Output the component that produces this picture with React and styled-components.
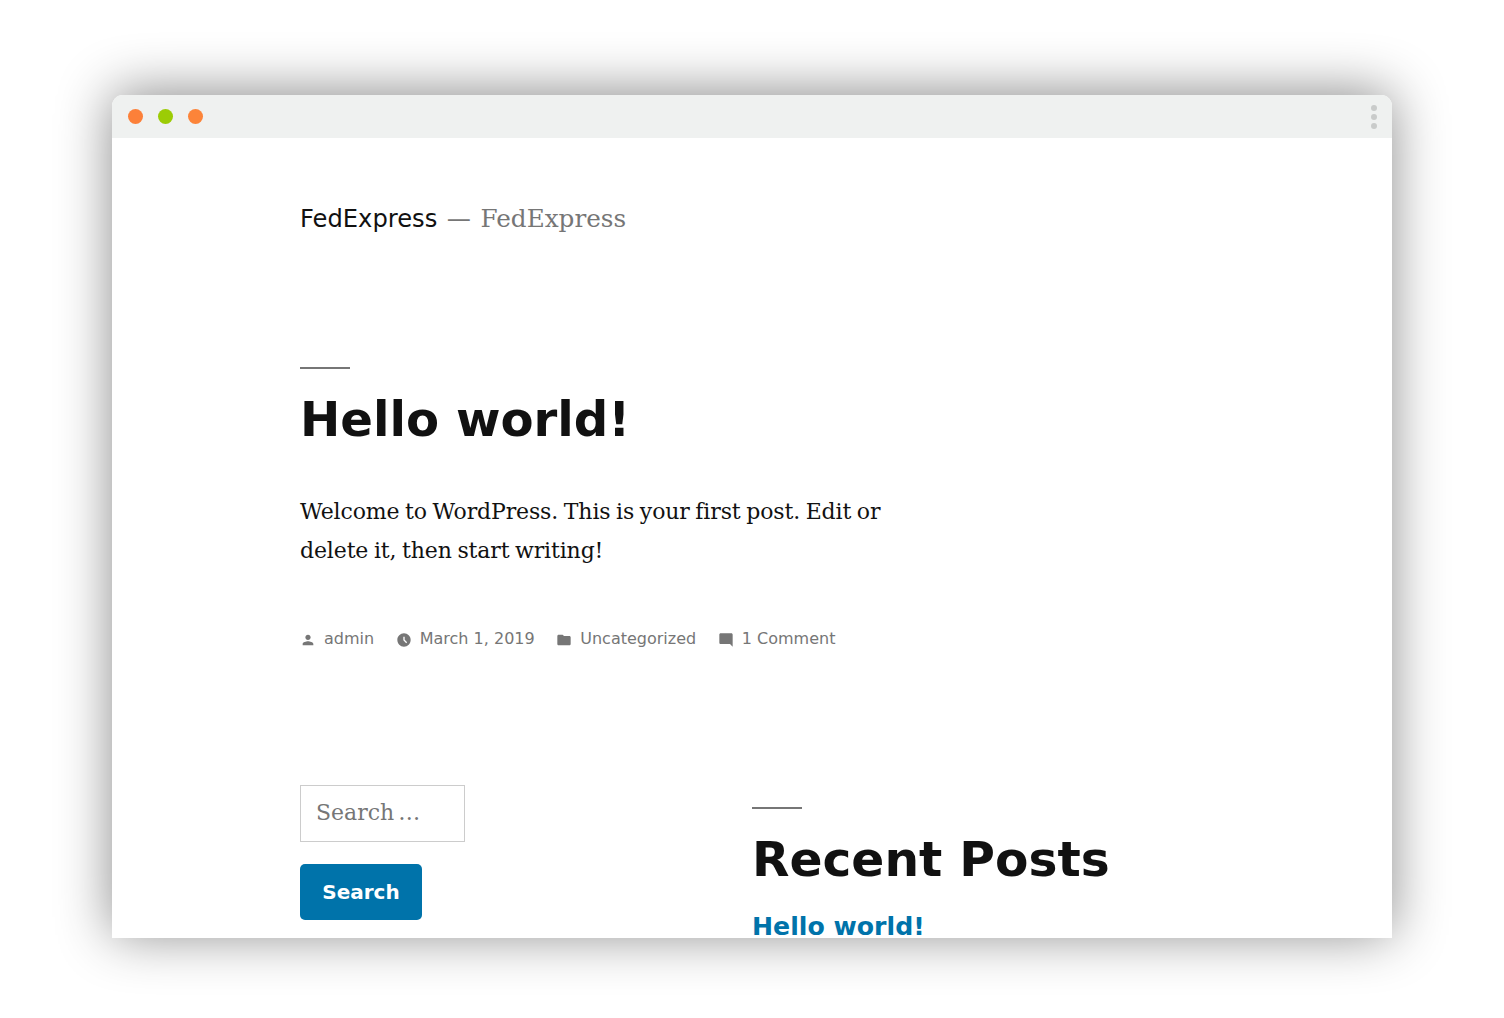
import React from 'react';
import styled, { createGlobalStyle } from 'styled-components';

const GlobalStyle = createGlobalStyle`
	html, body {
		margin: 0;
		padding: 0;
		background: #fff;
	}
	body {
		font-family: 'DejaVu Sans', sans-serif;
	}
`;

const Page = styled.div`
	height: 1018px;
	box-sizing: border-box;
	padding: 95px 112px 80px;
	overflow: hidden;
`;

const Window = styled.div`
	height: 843px;
	display: flex;
	flex-direction: column;
	background: #fff;
	border-radius: 11px 11px 0 0;
	box-shadow: 0 -3px 54px rgba(0, 0, 0, 0.46);
	overflow: hidden;
`;

const TitleBar = styled.div`
	height: 43px;
	flex: none;
	display: flex;
	align-items: center;
	gap: 15px;
	padding: 0 15px 0 16.4px;
	background: #eff1f0;
`;

const Dot = styled.span`
	width: 15px;
	height: 15px;
	border-radius: 50%;
	background: ${(props) => props.color};
`;

const Kebab = styled.div`
	margin-left: auto;
	display: flex;
	flex-direction: column;
	gap: 3px;
	margin-top: 1px;

	span {
		width: 6px;
		height: 6px;
		border-radius: 50%;
		background: #c9cbca;
	}
`;

const Content = styled.div`
	flex: 1;
	padding: 0 0 0 188px;
	overflow: hidden;
`;

const SiteHeader = styled.header`
	display: flex;
	align-items: baseline;
	height: 229px;
	padding-top: 66px;
	box-sizing: border-box;
`;

const SiteTitle = styled.span`
	font-size: 24.2px;
	color: #111;
`;

const SiteDash = styled.span`
	margin: 0 9.5px;
	font-size: 24.2px;
	color: #767676;
`;

const SiteTagline = styled.span`
	font-family: 'DejaVu Serif', serif;
	font-size: 24.7px;
	color: #767676;
`;

const Rule = styled.div`
	width: 50px;
	height: 2px;
	background: #767676;
`;

const PostTitle = styled.h1`
	margin: 16px 0 0;
	font-size: 48.2px;
	line-height: 68px;
	font-weight: 700;
	color: #111;
`;

const PostBody = styled.p`
	width: 600px;
	margin: 39px 0 0;
	font-family: 'DejaVu Serif', serif;
	font-size: 22px;
	line-height: 39px;
	letter-spacing: -0.13px;
	word-spacing: -1.2px;
	color: #111;
`;

const Meta = styled.div`
	display: flex;
	align-items: center;
	gap: 21.6px;
	margin-top: 57px;
	height: 22px;
	font-size: 16px;
	color: #767676;
`;

const MetaItem = styled.span`
	display: flex;
	align-items: center;
	gap: 8px;

	svg {
		width: 16px;
		height: 16px;
		fill: #767676;
		margin-top: 3px;
	}
`;

const Widgets = styled.div`
	display: flex;
	margin-top: 136px;
`;

const SearchColumn = styled.div`
	width: 452px;
	flex: none;
`;

const SearchBox = styled.div`
	width: 165px;
	height: 57px;
	box-sizing: border-box;
	display: flex;
	align-items: center;
	padding: 0 0 2px 15px;
	border: 1px solid #ccc;
	font-family: 'DejaVu Serif', serif;
	font-size: 22px;
	word-spacing: -3px;
	color: #767676;
`;

const SearchButton = styled.button`
	display: block;
	width: 122px;
	height: 56px;
	margin-top: 22px;
	padding: 0;
	border: none;
	border-radius: 5px;
	background: #0073aa;
	color: #fff;
	font-family: 'DejaVu Sans', sans-serif;
	font-size: 20px;
	font-weight: 700;
`;

const RecentColumn = styled.div`
	padding-top: 22px;
`;

const RecentTitle = styled.h2`
	margin: 16px 0 0;
	font-size: 48.7px;
	line-height: 68px;
	font-weight: 700;
	color: #111;
`;

const RecentLink = styled.a`
	display: block;
	margin-top: 16px;
	font-size: 25.2px;
	line-height: 36px;
	font-weight: 700;
	color: #0073aa;
	text-decoration: none;
`;

const metaItems = [
	{ label: 'admin', d: 'M12 12c2.21 0 4-1.79 4-4s-1.79-4-4-4-4 1.79-4 4 1.79 4 4 4zm0 2c-2.67 0-8 1.34-8 4v2h16v-2c0-2.66-5.33-4-8-4z' },
	{ label: 'March 1, 2019', d: 'M11.99 2C6.47 2 2 6.48 2 12s4.47 10 9.99 10C17.52 22 22 17.52 22 12S17.52 2 11.99 2zm3.3 14.71L11 12.41V7h2v4.59l3.71 3.71-1.42 1.41z' },
	{ label: 'Uncategorized', d: 'M10 4H4c-1.1 0-1.99.9-1.99 2L2 18c0 1.1.9 2 2 2h16c1.1 0 2-.9 2-2V8c0-1.1-.9-2-2-2h-8l-2-2z' },
	{ label: '1 Comment', d: 'M21.99 4c0-1.1-.89-2-1.99-2H4c-1.1 0-2 .9-2 2v12c0 1.1.9 2 2 2h14l4 4-.01-18z' },
];

function App() {
	return (
		<>
			<GlobalStyle />
			<Page>
				<Window>
					<TitleBar>
						<Dot color='#fc8039' />
						<Dot color='#9ccc05' />
						<Dot color='#fc8439' />
						<Kebab>
							<span />
							<span />
							<span />
						</Kebab>
					</TitleBar>
					<Content>
						<SiteHeader>
							<SiteTitle>FedExpress</SiteTitle>
							<SiteDash>—</SiteDash>
							<SiteTagline>FedExpress</SiteTagline>
						</SiteHeader>
						<Rule />
						<PostTitle>Hello world!</PostTitle>
						<PostBody>
							Welcome to WordPress. This is your first post. Edit or delete it,
							then start writing!
						</PostBody>
						<Meta>
							{metaItems.map((item) => (
								<MetaItem key={item.label}>
									<svg viewBox='0 0 24 24'>
										<path d={item.d} />
									</svg>
									{item.label}
								</MetaItem>
							))}
						</Meta>
						<Widgets>
							<SearchColumn>
								<SearchBox>Search …</SearchBox>
								<SearchButton>Search</SearchButton>
							</SearchColumn>
							<RecentColumn>
								<Rule />
								<RecentTitle>Recent Posts</RecentTitle>
								<RecentLink href='#'>Hello world!</RecentLink>
							</RecentColumn>
						</Widgets>
					</Content>
				</Window>
			</Page>
		</>
	);
}

export default App;
